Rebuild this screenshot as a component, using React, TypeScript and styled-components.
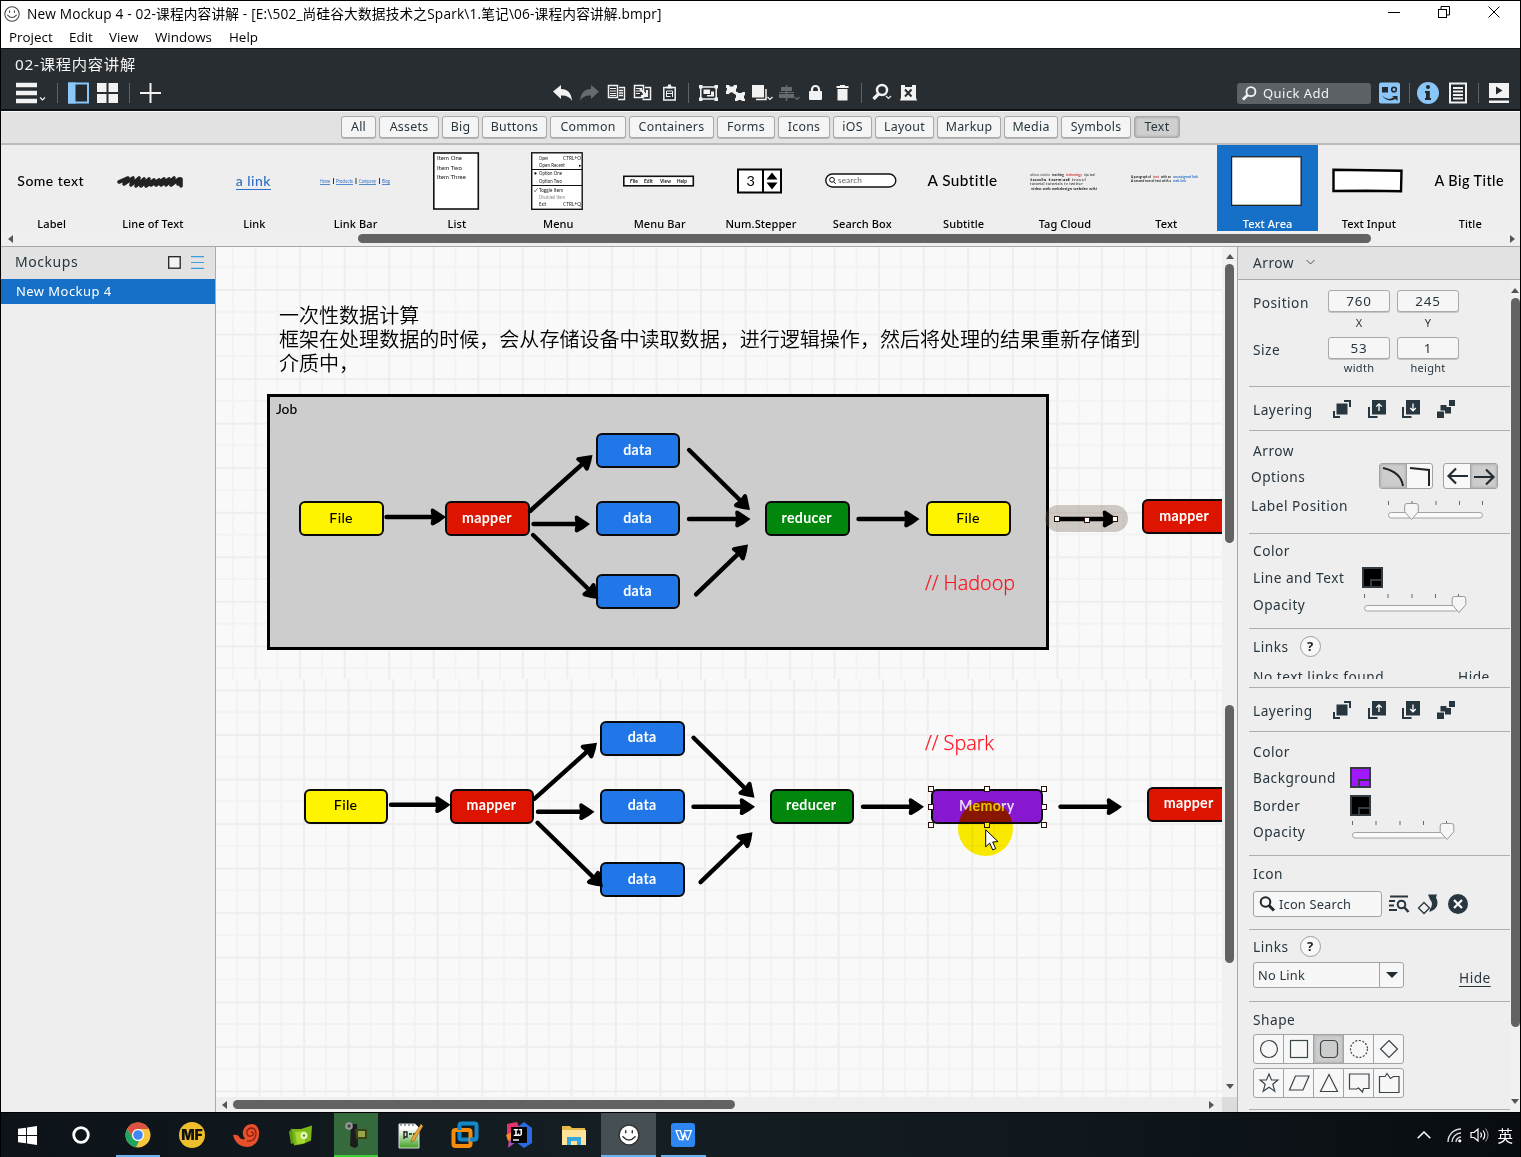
import React from 'react';
import styled, { createGlobalStyle, css } from 'styled-components';

const UI = '"Noto Sans", "Noto Sans CJK SC", sans-serif';
const WIN = '"Open Sans", "Noto Sans CJK SC", sans-serif';
const SKETCH = 'Lato, "Noto Sans CJK SC", sans-serif';

const ink = '#28363f';
const blue = '#1670c8';

const Global = createGlobalStyle`
  * { box-sizing: border-box; }
  body { margin: 0; background: #000; overflow: hidden; }
`;

const Frame = styled.div`
  width: 1521px;
  height: 1157px;
  display: flex;
  flex-direction: column;
  border: 1px solid #000;
  border-bottom: 0;
  background: #eee;
  font-family: ${UI};
  color: ${ink};
  overflow: hidden;
  white-space: nowrap;
`;

/* ---------- window chrome ---------- */

const TitleBar = styled.header`
  display: flex;
  align-items: center;
  height: 26px;
  padding: 0 20px 0 3px;
  background: #fff;
  color: #000;
  font: 13.7px/26px ${WIN};
`;

const TitleText = styled.span`
  flex: 1;
  margin-left: 7px;
  letter-spacing: 0.16px;
`;

const WindowButtons = styled.div`
  display: flex;
  align-items: center;
  gap: 38px;
  margin-top: -4px;
`;

const MenuBar = styled.nav`
  display: flex;
  gap: 16px;
  height: 21px;
  padding-left: 8px;
  background: #fff;
  color: #000;
  font: 13.4px/20px ${WIN};
`;

const MenuItem = styled.span<{ $w: number }>`
  width: ${p => p.$w}px;
`;

const DarkArea = styled.div`
  height: 63px;
  border-top: 1px solid #14181a;
  border-bottom: 2px solid #0e1214;
  background: #282d31;
  color: #f4f4f4;
`;

const DocTitle = styled.div`
  height: 32px;
  padding-left: 14px;
  font: 15.3px/31px ${UI};
  letter-spacing: 0.75px;
`;

const Toolbar = styled.div`
  display: grid;
  grid-template-columns: 552px 1fr 283px;
  height: 26px;
`;

const ToolGroup = styled.div<{ $pad?: number }>`
  display: flex;
  align-items: center;
  height: 24px;
  padding-left: ${p => p.$pad ?? 0}px;
`;

const Tool = styled.span<{ $w: number; $ml?: number }>`
  display: flex;
  width: ${p => p.$w}px;
  height: 22px;
  margin-left: ${p => p.$ml ?? 0}px;
  flex: none;
  svg { width: 100%; height: 22px; overflow: visible; }
`;

const Divider = styled.span<{ $ml: number }>`
  width: 1px;
  height: 20px;
  margin-left: ${p => p.$ml}px;
  background: #5f6467;
`;

const QuickAdd = styled.div`
  display: flex;
  align-items: center;
  gap: 6px;
  width: 134px;
  height: 21px;
  padding-left: 5px;
  border-radius: 3px;
  background: #5c6266;
  font-size: 13px;
  letter-spacing: 0.45px;
`;

/* ---------- component library ---------- */

const Categories = styled.div`
  display: flex;
  justify-content: center;
  gap: 3px;
  height: 34px;
  padding-top: 4px;
  border-top: 1px solid #f8f8f8;
  border-bottom: 2px solid #bcbcbc;
  background: #e2e2e2;
`;

const Category = styled.button<{ $w: number; $on?: boolean }>`
  width: ${p => p.$w}px;
  height: 22px;
  padding: 0;
  border: 1px solid #a9a9a9;
  border-radius: 3px;
  background: ${p => (p.$on ? '#cfcfcf' : '#f5f5f5')};
  box-shadow: ${p => (p.$on ? 'inset 0 0 3px #8d8d8d' : '0 1px 0 #b9b9b9')};
  color: ${ink};
  font: 12.4px/18px ${UI};
  letter-spacing: 0.25px;
`;

const Library = styled.div`
  display: flex;
  height: 86px;
  background: #eee;
  overflow: hidden;
`;

const LibItem = styled.div<{ $on?: boolean }>`
  display: flex;
  flex-direction: column;
  align-items: center;
  flex: 0 0 101.33px;
  height: 86px;
  background: ${p => (p.$on ? blue : 'transparent')};
  color: ${p => (p.$on ? '#fff' : '#000')};
  font: 500 11px/15px ${UI};
  letter-spacing: 0.1px;
`;

const Thumb = styled.div`
  display: flex;
  align-items: center;
  justify-content: center;
  height: 72px;
  padding-right: 2px;
  svg { overflow: visible; }
`;

const SketchText = styled.span<{ $link?: boolean; $size?: number }>`
  color: ${p => (p.$link ? '#2c6fc4' : '#000')};
  font: 500 ${p => p.$size ?? 14}px/17px ${SKETCH};
  letter-spacing: 0.45px;
  ${p => p.$link && css`border-bottom: 1px solid #2c6fc4;`}
`;

/* ---------- scrollbars ---------- */

const HScroll = styled.div<{ $h: number }>`
  display: flex;
  align-items: center;
  height: ${p => p.$h}px;
  background: #efefef;
`;

const HThumb = styled.div<{ $ml: number; $w: number }>`
  width: ${p => p.$w}px;
  height: 9px;
  margin-left: ${p => p.$ml}px;
  border-radius: 5px;
  background: #636363;
`;

const Caret = styled.i<{ $dir: 'l' | 'r' | 'u' | 'd' }>`
  flex: none;
  width: 0;
  height: 0;
  border: 4px solid transparent;
  ${p => p.$dir === 'l' && 'border-right: 5px solid #555; border-left: 0;'}
  ${p => p.$dir === 'r' && 'border-left: 5px solid #555; border-right: 0;'}
  ${p => p.$dir === 'u' && 'border-bottom: 5px solid #555; border-top: 0;'}
  ${p => p.$dir === 'd' && 'border-top: 5px solid #555; border-bottom: 0;'}
`;

const VScroll = styled.div<{ $pt: number; $w?: number }>`
  display: flex;
  flex-direction: column;
  align-items: center;
  width: ${p => p.$w ?? 15}px;
  height: 100%;
  padding-top: ${p => p.$pt}px;
  background: #f1f1f1;
`;

const VThumb = styled.div<{ $h: number; $mt: number }>`
  flex: none;
  width: 9px;
  height: ${p => p.$h}px;
  margin-top: ${p => p.$mt}px;
  border-radius: 5px;
  background: #636363;
`;

const Gap = styled.span<{ $size: number }>`
  flex: 0 0 ${p => p.$size}px;
`;

/* ---------- main area ---------- */

const Main = styled.main`
  display: grid;
  grid-template-columns: 215px 1021px 1fr;
  height: 866px;
  border-top: 1px solid #a8a8a8;
`;

const Sidebar = styled.aside`
  border-right: 1px solid #aaa;
  background: #eee;
`;

const SideHead = styled.div`
  display: flex;
  align-items: center;
  gap: 10px;
  height: 32px;
  padding: 0 11px 2px 14px;
  background: #e2e2e2;
  font-size: 14px;
  letter-spacing: 0.55px;
  span { flex: 1; margin-top: -2px; }
`;

const MockupRow = styled.div`
  height: 25px;
  padding-left: 15px;
  background: ${blue};
  color: #fff;
  font-size: 13px;
  line-height: 24px;
  letter-spacing: 0.45px;
`;

const Center = styled.section`
  display: flex;
  flex-direction: column;
`;

const Pane = styled.div<{ $h: number }>`
  display: flex;
  height: ${p => p.$h}px;
`;

const Canvas = styled.div<{ $gx: number; $gy: number }>`
  position: relative;
  width: 1006px;
  height: 100%;
  overflow: hidden;
  background-color: #f9f9f9;
  background-image:
    linear-gradient(90deg, #eeeeee 2px, transparent 2px),
    linear-gradient(#eeeeee 2px, transparent 2px),
    linear-gradient(90deg, transparent 22px, #f3f3f3 22px, #f3f3f3 24px, transparent 24px),
    linear-gradient(transparent 22px, #f3f3f3 22px, #f3f3f3 24px, transparent 24px);
  background-size: 44.56px 44.56px;
  background-position: ${p => p.$gx}px ${p => p.$gy}px;
`;

const At = styled.div<{ $x: number; $y: number }>`
  position: absolute;
  left: ${p => p.$x}px;
  top: ${p => p.$y}px;
`;

const Note = styled(At)`
  color: #000;
  font: 350 20.05px/24px "Noto Sans CJK SC DemiLight", "Noto Sans CJK SC", sans-serif;
`;

const RedNote = styled(At)`
  color: #ff0f1c;
  font: 300 19.8px/24px "Open Sans", sans-serif;
  -webkit-text-stroke: 0.25px #ff0f1c;
`;

const JobBox = styled(At)`
  width: 782px;
  height: 256px;
  padding: 4px 6px;
  border: 3px solid #000;
  background: #cdcdcd;
  color: #000;
  font: 500 13.8px/16px ${SKETCH};
`;

const NodeBox = styled(At)<{ $w: number; $bg: string; $dark?: boolean; $fg?: string }>`
  display: flex;
  align-items: center;
  justify-content: center;
  width: ${p => p.$w}px;
  height: 35px;
  padding: 0 1px 2px 0;
  border: 2px solid #0a0a0a;
  border-radius: 6px;
  background: ${p => p.$bg};
  color: ${p => p.$fg ?? (p.$dark ? '#000' : '#fff')};
  font: ${p => (p.$dark ? 500 : 700)} 14.2px/18px ${SKETCH};
  letter-spacing: 0.3px;
`;

const Strokes = styled.svg`
  position: absolute;
  inset: 0;
  width: 1006px;
  height: 100%;
`;

const SelectionGlow = styled(At)`
  width: 83px;
  height: 27px;
  border-radius: 14px;
  background: rgba(110, 90, 70, 0.3);
`;

const Handle = styled(At)`
  width: 6px;
  height: 6px;
  border: 1px solid #2a1208;
  background: #fff;
`;

const ClickHalo = styled(At)`
  width: 55px;
  height: 55px;
  border-radius: 50%;
  background: #ffee00;
  mix-blend-mode: multiply;
`;

const Corner = styled.div`
  width: 15px;
  height: 15px;
  background: #dcdcdc;
`;

const Footer = styled.div`
  display: flex;
  > :first-child { width: 1006px; }
`;

/* ---------- inspector ---------- */

const Inspector = styled.aside`
  display: flex;
  flex-direction: column;
  border-left: 1px solid #a8a8a8;
  background: #eee;
  font-size: 13.7px;
  letter-spacing: 0.5px;
`;

const InspectorHead = styled.div`
  display: flex;
  align-items: center;
  gap: 12px;
  height: 33px;
  padding: 0 0 2px 15px;
  border-bottom: 1px solid #aaa;
  background: #e2e2e2;
`;

const InspectorBody = styled.div`
  display: flex;
  height: 832px;
`;

const Stack = styled.div`
  width: 272px;
`;

const Part = styled.div<{ $h: number }>`
  height: ${p => p.$h}px;
  overflow: hidden;
`;

const Section = styled.section<{ $h: number; $pt?: number }>`
  height: ${p => p.$h}px;
  margin-left: 11px;
  padding: ${p => p.$pt ?? 0}px 0 0 4px;
  border-bottom: 1px solid #aeaeae;
`;

const Row = styled.div<{ $h: number; $mt?: number }>`
  display: flex;
  align-items: center;
  height: ${p => p.$h}px;
  margin-top: ${p => p.$mt ?? 0}px;
  svg { overflow: visible; flex: none; }
`;

const Label = styled.span<{ $w?: number; $shift?: number }>`
  width: ${p => (p.$w ? `${p.$w}px` : 'auto')};
  text-indent: ${p => p.$shift ?? 0}px;
  flex: none;
`;

const Geometry = styled.div`
  display: grid;
  grid-template-columns: 75px 62px 62px;
  grid-template-rows: 23px 24px 23px 20px;
  align-items: center;
  > :nth-child(3n) { margin-left: 7px; margin-right: -7px; }
`;

const GeometryLabel = styled.span`
  padding-top: 4px;
`;

const Field = styled.div`
  height: 22px;
  border: 1px solid #a9a9a9;
  border-radius: 3px;
  background: #f6f6f6;
  box-shadow: 0 1px 0 #c6c6c6;
  text-align: center;
  font-size: 13.4px;
  line-height: 20px;
  letter-spacing: 0.9px;
`;

const Caption = styled.span`
  margin-top: -2px;
  text-align: center;
  font-size: 11px;
  line-height: 14px;
  letter-spacing: 0.3px;
`;

const LayerIcons = styled.div`
  display: flex;
  gap: 16.5px;
`;

const Toggle = styled.div`
  display: flex;
  height: 26px;
  border: 1px solid #a3a3a3;
  border-radius: 3px;
  overflow: hidden;
  background: #f8f8f8;
`;

const ToggleCell = styled.span<{ $on?: boolean; $w: number }>`
  display: flex;
  align-items: center;
  justify-content: center;
  width: ${p => p.$w}px;
  background: ${p => (p.$on ? '#cdcdcd' : 'transparent')};
  box-shadow: ${p => (p.$on ? 'inset 0 0 3px #999' : 'none')};
  & + & { border-left: 1px solid #a3a3a3; }
  svg { overflow: visible; }
`;

const SliderBox = styled.span<{ $drop: number }>`
  display: flex;
  padding-top: ${p => p.$drop}px;
`;

const Swatch = styled.span<{ $c: string }>`
  display: flex;
  align-items: flex-end;
  justify-content: flex-end;
  width: 21px;
  height: 21px;
  border: 2px solid #333c42;
  background: ${p => p.$c};
  &::after {
    content: '';
    width: 9px;
    height: 5px;
    border-top: 2px solid #333c42;
    border-left: 2px solid #333c42;
  }
`;

const Help = styled.span`
  display: flex;
  align-items: center;
  justify-content: center;
  width: 21px;
  height: 21px;
  margin-left: 11px;
  border: 1px solid #9d9d9d;
  border-radius: 50%;
  background: #f8f8f8;
  font-weight: 700;
  font-size: 13px;
  letter-spacing: 0;
  color: #222;
`;

const SearchField = styled.div`
  display: flex;
  align-items: center;
  gap: 4px;
  width: 129px;
  height: 26px;
  margin-right: 7px;
  padding-left: 5px;
  border: 1px solid #a3a3a3;
  border-radius: 3px;
  background: #f7f7f7;
  font-size: 12.8px;
  letter-spacing: 0.2px;
`;

const Select = styled.div`
  display: flex;
  align-items: center;
  width: 151px;
  height: 26px;
  padding-left: 4px;
  border: 1px solid #a3a3a3;
  border-radius: 3px;
  background: #f7f7f7;
  font-size: 12.8px;
  letter-spacing: 0.2px;
  > :first-child { flex: 1; }
`;

const SelectArrow = styled.span`
  display: flex;
  align-items: center;
  justify-content: center;
  width: 24px;
  height: 100%;
  border-left: 1px solid #a3a3a3;
  i { border-width: 6px 6px 0; border-style: solid; border-color: #222c33 transparent transparent; }
`;

const HideLink = styled.span<{ $ml: number }>`
  margin-left: ${p => p.$ml}px;
  padding-top: 5px;
  text-decoration: underline;
  text-underline-offset: 3px;
`;

const ShapeRow = styled.div<{ $mt: number }>`
  display: flex;
  width: 151px;
  height: 30px;
  margin-top: ${p => p.$mt}px;
  border: 1px solid #a3a3a3;
  border-radius: 3px;
  background: #f7f7f7;
`;

/* ---------- taskbar ---------- */

const Taskbar = styled.footer`
  display: flex;
  height: 45px;
  margin: 0 -1px;
  border-top: 1px solid #000;
  background: linear-gradient(90deg, #0d1318, #141e23 40%, #10181d 70%, #080c10);
`;

const Task = styled.div<{ $w?: number; $bg?: string; $line?: string; $inset?: number }>`
  display: flex;
  align-items: center;
  justify-content: center;
  flex: 0 0 ${p => (p.$w ?? 54.55) - 2 * (p.$inset ?? 0)}px;
  margin: 0 ${p => p.$inset ?? 0}px;
  height: 44px;
  padding-top: 2px;
  background: ${p => p.$bg ?? 'transparent'};
  border-bottom: 2px solid ${p => p.$line ?? 'transparent'};
  svg { overflow: visible; }
`;

const Tray = styled.div`
  display: flex;
  align-items: center;
  gap: 8px;
  margin-left: auto;
  padding-right: 8px;
  color: #fff;
  font: 15.5px/20px "Noto Sans CJK SC", sans-serif;
`;

/* ---------- drawings ---------- */

const W = '#f2f2f2';

const Arrow = ({ a, b }: { a: [number, number]; b: [number, number] }) => {
  const ang = (Math.atan2(b[1] - a[1], b[0] - a[0]) * 180) / Math.PI;
  const len = Math.hypot(b[0] - a[0], b[1] - a[1]);
  return (
    <g transform={`translate(${a[0]} ${a[1]}) rotate(${ang})`}>
      <path d={`M1.5 0H${len - 10}`} stroke="#000" strokeWidth="4.400" strokeLinecap="round" />
      <path
        transform={`translate(${len} 0)`}
        d="M0 0Q-6 -4 -12.5 -8.3Q-15.6 -8.8 -15.3 -6L-14.3 0L-15.3 6Q-15.6 8.8 -12.5 8.3Q-6 5 0 0Z"
      />
    </g>
  );
};

type Pt = [number, number];
const links: [Pt, Pt][] = [
  [[385, 517], [446, 517]],
  [[529, 512], [592.5, 455]],
  [[532, 524], [590, 524]],
  [[532, 534], [598.5, 599]],
  [[688, 449], [750, 510]],
  [[687.5, 519], [750.5, 519]],
  [[695, 595.5], [748, 544.5]],
  [[857, 519], [919.5, 519]],
];

const RED = '#dc1400';
const BLUE = '#2277e8';
const nodes = [
  { x: 299.4, y: 501, t: 'File', c: '#fff400', dark: true },
  { x: 445.2, y: 501, t: 'mapper', c: RED },
  { x: 595.8, y: 433, t: 'data', c: BLUE },
  { x: 595.8, y: 501, t: 'data', c: BLUE },
  { x: 595.8, y: 574.4, t: 'data', c: BLUE },
  { x: 765, y: 501, t: 'reducer', c: '#00870c' },
  { x: 1142.4, y: 499, t: 'mapper', c: RED },
];

const Flow = ({ dx, dy, extra }: { dx: number; dy: number; extra?: boolean }) => (
  <>
    {nodes.map((n, i) => (
      <NodeBox key={i} $x={n.x + dx} $y={n.y + dy} $w={84.5} $bg={n.c} $dark={n.dark}>{n.t}</NodeBox>
    ))}
    <Strokes>
      <g transform={`translate(${dx} ${dy})`}>
        {links.map(([a, b], i) => <Arrow key={i} a={a} b={b} />)}
        {extra && <Arrow a={[1054.5, 519]} b={[1117.5, 519]} />}
      </g>
    </Strokes>
  </>
);

const Chev = ({ x, y, c = W }: { x: number; y: number; c?: string }) => (
  <path d={`M${x} ${y}l2.500 2.500 2.500-2.500`} fill="none" stroke={c} strokeWidth="1.200" />
);

const Face = ({ s, fill, stroke }: { s: number; fill: string; stroke: string }) => (
  <svg width={s} height={s} viewBox="0 0 20 20" fill="none" stroke={stroke} strokeWidth="1.300">
    <circle cx="10" cy="10" r="9" fill={fill} />
    <path d="M7 6v2M13 6v2M4.500 11.500q5.500 6 11 0" strokeLinecap="round" />
  </svg>
);

const Undo = ({ flip, c }: { flip?: boolean; c: string }) => (
  <svg viewBox="0 0 19 22"><path transform={flip ? 'translate(19 0) scale(-1 1)' : undefined} d="M0 9.500L8 3v4q10 0 11 12q-3-6-11-5.500v3.500z" fill={c} /></svg>
);

const LayerIcon = ({ k }: { k: number }) => (
  <svg width="18" height="18" viewBox="0 0 18 18">
    {k === 0 && <><rect x="3.500" y="3.500" width="11" height="11" fill={ink} /><path d="M11 1h6v6M1 11v6h6" fill="none" stroke={ink} strokeWidth="2" /></>}
    {(k === 1 || k === 2) && (
      <>
        <rect x="4" y="0" width="14" height="14.500" fill={ink} />
        <path d="M1 7v10h8.500" fill="none" stroke={ink} strokeWidth="2" />
        <path d={k === 1 ? 'M11 11V4M8.200 6.600L11 3.800l2.800 2.800' : 'M11 3.500v7M8.200 8L11 10.800 13.800 8'} fill="none" stroke="#fff" strokeWidth="1.300" />
      </>
    )}
    {k === 3 && <g fill={ink}><rect x="12" y="0" width="6" height="6" /><rect x="0" y="11.500" width="7" height="6.500" /><rect x="3.500" y="5" width="6" height="5.500" /><rect x="8" y="7" width="6" height="6.500" /></g>}
  </svg>
);

const Slider = ({ v, drop = 3 }: { v: number; drop?: number }) => (
  <SliderBox $drop={drop}>
    <svg width="95" height="24" viewBox="0 0 95 24">
      <path d="M.5 0v4M24 0v4M48 0v4M71.500 0v4M94.500 0v4" stroke="#666" />
      <rect x=".5" y="11.500" width="94" height="5.500" rx="2.700" fill="#fafafa" stroke="#a3a3a3" />
      <path transform={`translate(${v} 2)`} d="M-4.500 .5h9q2.300 0 2.300 2.300v6L0 16.500l-6.800-7.700v-6q0-2.300 2.300-2.300z" fill="#f6f6f6" stroke="#999" />
    </svg>
  </SliderBox>
);

const shapes: React.ReactNode[] = [
  <circle cx="9" cy="9" r="8.500" />,
  <rect x=".5" y=".5" width="17" height="17" />,
  <rect x=".5" y=".5" width="17" height="17" rx="4" />,
  <circle cx="9" cy="9" r="8.500" strokeDasharray="2 1.600" />,
  <path d="M9 .5L17.500 9 9 17.500 .5 9z" />,
  <path d="M9 0l2.500 6h6.300l-5 4.200 2 7L9 13.200l-5.800 4 2-7L.2 6h6.300z" />,
  <path d="M5.500 2h13.500l-6 14H-.5z" />,
  <path d="M9 .5l8.500 17H.5z" />,
  <path d="M-.5 0h19.500v14.500h-5.500l-1 3.500-4-4-2 1H-.5z" />,
  <path d="M-.5 2.500h5.500l2-3 3.500 5 3-2h5.500v16H-.5z" />,
];

const ShapeCells = ({ from, on }: { from: number; on?: number }) => (
  <>
    {shapes.slice(from, from + 5).map((s, i) => (
      <ToggleCell key={i} $w={i === 0 ? 29 : 30} $on={i === on}>
        <svg width="18" height="18" viewBox="0 0 18 18" fill="none" stroke="#3a454c" strokeWidth="1.200">{s}</svg>
      </ToggleCell>
    ))}
  </>
);

const Lens = ({ s, c, flip }: { s: number; c: string; flip?: boolean }) => (
  <svg width={s} height={s} viewBox="0 0 16 16" fill="none" stroke={c}>
    <g transform={flip ? 'translate(16 0) scale(-1 1)' : undefined}>
      <circle cx="6.500" cy="6" r="4.800" strokeWidth="2" />
      <path d="M10 9.500l5 5" strokeWidth="3" />
    </g>
  </svg>
);

const tiny = (x: number, y: number, t: string, w: number, fill = '#111', size = 6, weight = 400) => (
  <text x={x} y={y} fill={fill} fontSize={size} fontWeight={weight} fontFamily={SKETCH} textLength={w} lengthAdjust="spacingAndGlyphs">{t}</text>
);

const library: { n: string; on?: boolean; d: React.ReactNode }[] = [
  { n: 'Label', d: <SketchText>Some text</SketchText> },
  { n: 'Line of Text', d: (
    <svg width="68" height="12" fill="none" stroke="#222" strokeWidth="3.600" strokeLinecap="round" strokeLinejoin="round">
      <path d="M1 7l9-4-4 6 9-6-2 7 8-7-3 8 8-7-3 7 8-7-3 7 8-6-3 5 8-5-3 5 8-6-3 6 8-6-3 6 8-7-3 7 8-6-1 5 3-5v7" />
    </svg>) },
  { n: 'Link', d: <SketchText $link>a link</SketchText> },
  { n: 'Link Bar', d: (
    <svg width="70" height="10">
      {tiny(0, 7, 'Home', 10, '#2c6fc4')}{tiny(16, 7, 'Products', 17, '#2c6fc4')}{tiny(39, 7, 'Company', 17, '#2c6fc4')}{tiny(62, 7, 'Blog', 8, '#2c6fc4')}
      <path d="M0 8.500h10M16 8.500h17M39 8.500h17M62 8.500h8" stroke="#2c6fc4" strokeWidth=".8" />
      <path d="M13.500 2v6M36 2v6M59.500 2v6" stroke="#333" />
    </svg>) },
  { n: 'List', d: (
    <svg width="46" height="58">
      <rect x=".8" y="1" width="44.500" height="56" fill="#fff" stroke="#111" strokeWidth="1.600" />
      {tiny(4, 8, 'Item One', 25)}{tiny(4, 17.5, 'Item Two', 25)}{tiny(4, 27, 'Item Three', 29)}
    </svg>) },
  { n: 'Menu', d: (
    <svg width="52" height="58">
      <rect x=".7" y=".8" width="50.500" height="56.500" fill="#fff" stroke="#111" strokeWidth="1.400" />
      {tiny(8, 7.5, 'Open', 9, '#111', 5)}{tiny(32, 7.5, 'CTRL+O', 18, '#111', 5)}
      {tiny(8, 14.5, 'Open Recent', 26, '#111', 5)}{tiny(48, 14.5, '▸', 3, '#111', 5)}
      {tiny(3, 23, '●', 3, '#111', 5)}{tiny(8, 23, 'Option One', 23, '#111', 5)}
      {tiny(8, 30.5, 'Option Two', 23, '#111', 5)}
      {tiny(3, 39.5, '✓', 4, '#111', 5)}{tiny(8, 39.5, 'Toggle Item', 24, '#111', 5)}
      {tiny(8, 46.5, 'Disabled Item', 26, '#888', 5)}
      {tiny(8, 53.5, 'Exit', 7, '#111', 5)}{tiny(32, 53.5, 'CTRL+Q', 18, '#111', 5)}
      <path d="M1 17.500h50M1 33.500h50" stroke="#111" />
    </svg>) },
  { n: 'Menu Bar', d: (
    <svg width="71" height="12">
      <rect x=".8" y="1.300" width="69.500" height="9.500" fill="#fff" stroke="#111" strokeWidth="1.600" />
      {tiny(7, 8, 'File', 8, '#111', 5.5, 700)}{tiny(21, 8, 'Edit', 9, '#111', 5.5, 700)}{tiny(37, 8, 'View', 11, '#111', 5.5, 700)}{tiny(54, 8, 'Help', 10, '#111', 5.5, 700)}
    </svg>) },
  { n: 'Num.Stepper', d: (
    <svg width="45" height="26">
      <rect x="1" y="1.500" width="43" height="23" fill="#fff" stroke="#000" strokeWidth="2" />
      <path d="M26 1v24" stroke="#000" strokeWidth="2" />
      <path d="M29.500 11.500l5.500-7 5.500 7zM29.500 14.500l5.500 7 5.500-7z" />
      {tiny(9.5, 18, '3', 8.5, '#000', 14)}
    </svg>) },
  { n: 'Search Box', d: (
    <svg width="72" height="15" fill="none" stroke="#111">
      <rect x=".8" y="1" width="70" height="13" rx="6.500" fill="#fff" strokeWidth="1.400" />
      <circle cx="7" cy="6.800" r="2.400" /><path d="M8.800 8.800l2 2" />
      <g stroke="none">{tiny(13, 9.5, 'search', 24, '#666', 7.5)}</g>
    </svg>) },
  { n: 'Subtitle', d: <SketchText $size={15.3}>A Subtitle</SketchText> },
  { n: 'Tag Cloud', d: (
    <svg width="68" height="22">
      {tiny(0, 5.6, 'software statistics', 20, '#333', 3.2)}{tiny(22, 5.6, 'teaching', 12, '#111', 3.8, 700)}{tiny(36, 5.6, 'technology', 16, '#c33', 3.8, 700)}{tiny(54, 5.6, 'tips tool', 11, '#111', 3.4)}
      {tiny(0, 10.5, 'tools toread', 40, '#222', 3.7, 700)}{tiny(42, 10.5, 'travel', 14, '#222', 3.4)}{tiny(0, 15.4, 'tutorial tutorials tv twitter', 53, '#222', 3.7)}
      {tiny(1, 20.3, 'video web webdesign webdev wiki', 66, '#222', 3.7, 700)}
    </svg>) },
  { n: 'Text', d: (
    <svg width="68" height="34">
      {tiny(0, 13.5, 'A paragraph of', 20, '#111', 3.6, 700)}{tiny(22, 13.5, 'text', 6, '#c33', 3.6, 700)}{tiny(30, 13.5, 'with an', 10, '#111', 3.6, 700)}{tiny(42, 13.5, 'unassigned link', 25, '#2c6fc4', 3.6, 700)}
      {tiny(0, 18.3, 'A second row of text with a', 40, '#111', 3.6, 700)}{tiny(42, 18.3, 'web link', 13, '#2c6fc4', 3.6, 700)}
    </svg>) },
  { n: 'Text Area', on: true, d: <svg width="71" height="50"><rect x=".6" y=".8" width="69.500" height="48.500" fill="#fff" stroke="#1a1a1a" strokeWidth="1.200" /></svg> },
  { n: 'Text Input', d: <svg width="71" height="25"><path d="M1.500 1.800l68 1-.5 20.500-34-.6-33.500.3z" fill="#fff" stroke="#000" strokeWidth="2.400" /></svg> },
  { n: 'Title', d: <SketchText $size={14.4}>A Big Title</SketchText> },
];

const categories: [string, number][] = [
  ['All', 35], ['Assets', 60], ['Big', 37], ['Buttons', 65], ['Common', 76], ['Containers', 85], ['Forms', 58],
  ['Icons', 52], ['iOS', 39], ['Layout', 59], ['Markup', 64], ['Media', 54], ['Symbols', 70], ['Text', 46],
];

const menus: [string, number][] = [['Project', 44], ['Edit', 24], ['View', 30], ['Windows', 58], ['Help', 32]];

const Layering = ({ h }: { h: number }) => (
  <Row $h={h}>
    <Label $w={80}>Layering</Label>
    <LayerIcons>{[0, 1, 2, 3].map(k => <LayerIcon key={k} k={k} />)}</LayerIcons>
  </Row>
);

const handles: Pt[] = [[931, 789], [987, 789], [1044, 789], [931, 807], [1044, 807], [931, 825], [987, 825], [1044, 825]];

export default function App() {
  return (
    <Frame>
      <Global />
      <TitleBar>
        <Face s={16} fill="#fff" stroke="#444" />
        <TitleText>{'New Mockup 4 - 02-课程内容讲解 - [E:\\502_尚硅谷大数据技术之Spark\\1.笔记\\06-课程内容讲解.bmpr]'}</TitleText>
        <WindowButtons>
          <svg width="12" height="12" stroke="#000"><path d="M0 6.500h12" /></svg>
          <svg width="12" height="12" fill="none" stroke="#000"><rect x=".5" y="3.500" width="8" height="8" /><path d="M3 3.500v-3h8.500v8.500h-3" /></svg>
          <svg width="12" height="12" stroke="#000"><path d="M.5 .5l11 11M11.500 .5l-11 11" /></svg>
        </WindowButtons>
      </TitleBar>
      <MenuBar>{menus.map(([m, w]) => <MenuItem key={m} $w={w}>{m}</MenuItem>)}</MenuBar>

      <DarkArea>
        <DocTitle>02-课程内容讲解</DocTitle>
        <Toolbar>
          <ToolGroup $pad={15}>
            <Tool $w={30}><svg viewBox="0 0 30 22"><path d="M0 3h21M0 11h21M0 19h21" stroke={W} strokeWidth="4.400" /><Chev x={24} y={15.5} /></svg></Tool>
            <Divider $ml={11} />
            <Tool $w={21} $ml={10}><svg viewBox="0 0 21 22"><rect x="1" y="1.500" width="19" height="19" fill="#23292c" stroke="#8ac6f8" strokeWidth="2" /><path d="M0 .5h7.500v21H0z" fill="#8ac6f8" /></svg></Tool>
            <Tool $w={21} $ml={8}><svg viewBox="0 0 21 22" fill={W}><path d="M0 1h9.500v9H0zM11.500 1H21v9h-9.500zM0 12h9.500v9H0zM11.500 12H21v9h-9.500z" /></svg></Tool>
            <Divider $ml={11} />
            <Tool $w={21} $ml={10}><svg viewBox="0 0 21 22" stroke={W} strokeWidth="2"><path d="M10.500 1v20M0 11h21" /></svg></Tool>
          </ToolGroup>
          <ToolGroup>
            <Tool $w={19}><Undo c={W} /></Tool>
            <Tool $w={19} $ml={8}><Undo c="#666b6e" flip /></Tool>
            <Tool $w={17} $ml={9}><svg viewBox="0 0 17 22" fill="none" stroke={W}><rect x=".5" y="3.500" width="9" height="12" strokeWidth="1.500" /><path d="M2 6.500h6M2 9h6M2 11.500h6M2 13.500h6" /><path d="M11 5.500h5.500v12h-6.500M11 8.500h4M11 11h4M11 13.500h4" strokeWidth="1.400" /></svg></Tool>
            <Tool $w={17} $ml={9}><svg viewBox="0 0 17 22" fill="none" stroke={W}><rect x=".5" y="3.500" width="9" height="12" strokeWidth="1.500" /><path d="M2 6.500h6M2 9h5M2 11.500h4" /><path d="M11 5.500h5.500v12h-8" strokeWidth="1.500" /><path d="M6 7l6 6M13 8v6h-6" strokeWidth="2.200" /></svg></Tool>
            <Tool $w={13} $ml={12}><svg viewBox="0 0 13 22" fill="none" stroke={W}><rect x=".8" y="5.500" width="11.400" height="12.500" strokeWidth="1.500" /><path d="M3.500 5.500h6M5 3.500h3" strokeWidth="2" /><path d="M3.500 9h6M3.500 11.500h6M3.500 14.500h4M3.500 9v6M9.500 9v6" /></svg></Tool>
            <Divider $ml={12} />
            <Tool $w={19} $ml={10}><svg viewBox="0 0 19 22"><rect x="1.800" y="5" width="15.400" height="12" fill="none" stroke={W} strokeWidth="1.500" /><path d="M0 3h3.500v3.500H0zM15.500 3H19v3.500h-3.500zM0 15.500h3.500V19H0zM15.500 15.500H19V19h-3.500zM4.500 7.500h6.500v4.500H4.500zM12 9.500h3v5H8v-1.500h4z" fill={W} /></svg></Tool>
            <Tool $w={19} $ml={8}><svg viewBox="0 0 19 22" fill={W}><path d="M0 3h3l1 1.500h3l1-1.500h3v3l-1 1v2l1 3H8l-1-1.500H4L3 12H0V9l1-1V6.500L0 5.500z" /><path d="M9 10h2.500l1 1h3l1-1H19v3l-1 .8v2.400l1 .8v2h-3l-1-1h-2.500l-1 1H9v-2.500l1-1V13l-1-.8z" /></svg></Tool>
            <Tool $w={21} $ml={7}><svg viewBox="0 0 21 22"><rect x="0" y="3" width="12" height="12.500" fill={W} /><path d="M14 7v10.500H4" fill="none" stroke={W} strokeWidth="1.500" /><Chev x={15.5} y={15} /></svg></Tool>
            <Tool $w={21} $ml={6}><svg viewBox="0 0 21 22"><path d="M2 7h11M0 14h15" stroke="#666b6e" strokeWidth="4" /><path d="M7.500 3v16" stroke="#666b6e" strokeWidth="1.500" /><path d="M0 10.500h15" stroke="#666b6e" /><Chev x={15.5} y={15} c="#666b6e" /></svg></Tool>
            <Tool $w={13} $ml={9}><svg viewBox="0 0 13 22"><rect x="0" y="9" width="13" height="9" rx="1" fill={W} /><path d="M3 10V7.500a3.500 3.500 0 017 0V10" fill="none" stroke={W} strokeWidth="2.200" /></svg></Tool>
            <Tool $w={13} $ml={14}><svg viewBox="0 0 13 22"><path d="M.5 5h12M4 4h5" stroke={W} strokeWidth="2" /><path d="M1.500 7h10v11.500h-10z" fill={W} /></svg></Tool>
            <Divider $ml={12} />
            <Tool $w={19} $ml={11}><svg viewBox="0 0 19 22"><circle cx="9" cy="8" r="5" fill="none" stroke={W} strokeWidth="2.500" /><path d="M5.500 12l-5 5" stroke={W} strokeWidth="3.200" /><Chev x={13} y={14} /></svg></Tool>
            <Tool $w={17} $ml={8}><svg viewBox="0 0 17 22"><path d="M1 3h4v2h7V3h4v12.500l1 3H0l1-3z" fill={W} /><path d="M5 7.500l6.500 7M11.500 7.500l-6.500 7" stroke="#282d31" strokeWidth="2" /></svg></Tool>
          </ToolGroup>
          <ToolGroup>
            <QuickAdd><Lens s={15} c={W} flip />Quick Add</QuickAdd>
            <Tool $w={21} $ml={8}><svg viewBox="0 0 21 22"><rect x="0" y=".5" width="21" height="21" rx="2" fill="#8ac6f8" /><path d="M3 5h6v5.500H3z" fill="#23292c" /><circle cx="15" cy="7.500" r="2.300" fill="none" stroke="#23292c" strokeWidth="1.600" /><path d="M3 13.500q6 6 12 1.500l-2.500-1h6v5l-2-2q-8 4-13.500-3.500z" fill="#23292c" /></svg></Tool>
            <Divider $ml={9} />
            <Tool $w={22} $ml={7}><svg viewBox="0 0 22 22"><circle cx="11" cy="11" r="11" fill="#8ac6f8" /><circle cx="11" cy="5" r="2" fill="#23292c" /><path d="M8 9h4.800v7H14v2H8v-2h1v-5H8z" fill="#23292c" /></svg></Tool>
            <Tool $w={18} $ml={10}><svg viewBox="0 0 18 22" stroke={W}><rect x="1" y="1.500" width="16" height="19" fill="#23292c" strokeWidth="2" /><path d="M4 6h10M4 9.500h10M4 13h10M4 16.500h10" strokeWidth="1.800" /></svg></Tool>
            <Divider $ml={11} />
            <Tool $w={20} $ml={10}><svg viewBox="0 0 20 22"><path d="M0 1h20v15H0zM0 18.500h20v2.500H0z" fill={W} /><path d="M7 4.500v8l6.500-4z" fill="#23292c" /></svg></Tool>
          </ToolGroup>
        </Toolbar>
      </DarkArea>

      <Categories>
        {categories.map(([c, w]) => <Category key={c} $w={w} $on={c === 'Text'}>{c}</Category>)}
      </Categories>
      <Library>
        {library.map(l => <LibItem key={l.n} $on={l.on}><Thumb>{l.d}</Thumb>{l.n}</LibItem>)}
      </Library>
      <HScroll $h={15}>
        <Gap $size={7} /><Caret $dir="l" />
        <HThumb $ml={345} $w={1013} />
        <Gap $size={139} /><Caret $dir="r" />
      </HScroll>

      <Main>
        <Sidebar>
          <SideHead>
            <span>Mockups</span>
            <svg width="13" height="13" fill="#f4f4f4" stroke="#222"><rect x=".7" y=".7" width="11.500" height="11.500" strokeWidth="1.300" /></svg>
            <svg width="13" height="13" stroke="#3e9bdc" strokeWidth="1.200"><path d="M0 .7h13M0 6.500h13M0 12.300h13" /></svg>
          </SideHead>
          <MockupRow>New Mockup 4</MockupRow>
        </Sidebar>

        <Center>
          <Pane $h={432}>
            <Canvas $gx={-6} $gy={42}>
              <Note $x={63} $y={55.5}>
                一次性数据计算<br />
                框架在处理数据的时候，会从存储设备中读取数据，进行逻辑操作，然后将处理的结果重新存储到<br />
                介质中，
              </Note>
              <JobBox $x={51} $y={147}>Job</JobBox>
              <Flow dx={-216} dy={-247} />
              <NodeBox $x={710.3} $y={254} $w={84.5} $bg="#fff400" $dark>File</NodeBox>
              <RedNote $x={709} $y={323.5}>// Hadoop</RedNote>
              <SelectionGlow $x={829} $y={258} />
              <Strokes><Arrow a={[839, 272]} b={[902, 272]} /></Strokes>
              <Handle $x={838} $y={269} /><Handle $x={868} $y={270} /><Handle $x={896} $y={269} />
            </Canvas>
            <VScroll $pt={7}><Caret $dir="u" /><VThumb $h={279} $mt={5} /></VScroll>
          </Pane>
          <Pane $h={418}>
            <Canvas $gx={-2} $gy={55}>
              <Flow dx={-211.5} dy={-391.3} extra />
              <NodeBox $x={715.3} $y={110} $w={112} $bg="#8817d2" $fg="#e2d2f0">Memory</NodeBox>
              <RedNote $x={709} $y={51.5}>// Spark</RedNote>
              {handles.map(([x, y], i) => <Handle key={i} $x={x - 219} $y={y - 682} />)}
              <ClickHalo $x={741.5} $y={122} />
              <At $x={769} $y={150}>
                <svg width="14" height="22" fill="#fff" stroke="#000"><path d="M.7 .8v17l4-3.700 3 6.800 3-1.300-3-6.600 5.300-.4z" /></svg>
              </At>
            </Canvas>
            <VScroll $pt={26}><VThumb $h={258} $mt={0} /><Gap $size={121} /><Caret $dir="d" /></VScroll>
          </Pane>
          <Footer>
            <HScroll $h={15}><Gap $size={6} /><Caret $dir="l" /><HThumb $ml={6} $w={502} /><Gap $size={474} /><Caret $dir="r" /></HScroll>
            <Corner />
          </Footer>
        </Center>

        <Inspector>
          <InspectorHead>
            Arrow
            <svg width="9" height="6" fill="none" stroke="#555"><path d="M.5 1l4 4 4-4" /></svg>
          </InspectorHead>
          <InspectorBody>
            <Stack>
              <Part $h={399}>
                <Section $h={107} $pt={9}>
                  <Geometry>
                    <GeometryLabel>Position</GeometryLabel><Field>760</Field><Field>245</Field>
                    <span /><Caption>X</Caption><Caption>Y</Caption>
                    <GeometryLabel>Size</GeometryLabel><Field>53</Field><Field>1</Field>
                    <span /><Caption>width</Caption><Caption>height</Caption>
                  </Geometry>
                </Section>
                <Section $h={44}><Layering h={44} /></Section>
                <Section $h={103} $pt={7}>
                  <Row $h={24}>Arrow</Row>
                  <Row $h={28}>
                    <Label $w={126} $shift={-2}>Options</Label>
                    <Toggle>
                      <ToggleCell $w={26} $on><svg width="22" height="20" fill="none" stroke="#222" strokeWidth="2"><path d="M1 2q18 4 20 18" /></svg></ToggleCell>
                      <ToggleCell $w={26}><svg width="22" height="20" fill="none" stroke="#222" strokeWidth="2"><path d="M1 2l19 2v16" /></svg></ToggleCell>
                    </Toggle>
                    <Gap $size={10} />
                    <Toggle>
                      <ToggleCell $w={26}><svg width="21" height="18" fill="none" stroke="#222c33" strokeWidth="2.200"><path d="M21 9H2M9 1.500L1.500 9 9 16.500" /></svg></ToggleCell>
                      <ToggleCell $w={27} $on><svg width="21" height="18" fill="none" stroke="#222c33" strokeWidth="2.200"><path d="M0 10h19M12 2.500l7.500 7.500-7.500 7.500" /></svg></ToggleCell>
                    </Toggle>
                  </Row>
                  <Row $h={30}><Label $w={135} $shift={-2}>Label Position</Label><Slider v={23.5} drop={16} /></Row>
                </Section>
                <Section $h={95} $pt={4}>
                  <Row $h={24}>Color</Row>
                  <Row $h={30}><Label $w={109}>Line and Text</Label><Swatch $c="#000" /></Row>
                  <Row $h={24}><Label $w={111}>Opacity</Label><Slider v={95} /></Row>
                </Section>
                <Section $h={80} $pt={6}>
                  <Row $h={22}>Links<Help>?</Help></Row>
                  <Row $h={20} $mt={9}><Label $w={205}>No text links found</Label><span>Hide</span></Row>
                </Section>
              </Part>
              <Part $h={433}>
                <Section $h={9} />
                <Section $h={44}><Layering h={44} /></Section>
                <Section $h={124} $pt={7}>
                  <Row $h={24}>Color</Row>
                  <Row $h={29}><Label $w={97}>Background</Label><Swatch $c="#a118ff" /></Row>
                  <Row $h={26}><Label $w={97}>Border</Label><Swatch $c="#000" /></Row>
                  <Row $h={27}><Label $w={99}>Opacity</Label><Slider v={95} /></Row>
                </Section>
                <Section $h={74} $pt={5}>
                  <Row $h={24}>Icon</Row>
                  <Row $h={26} $mt={6}>
                    <SearchField><Lens s={16} c="#1c252b" />Icon Search</SearchField>
                    <svg width="20" height="18" fill="none" stroke={ink} strokeWidth="2"><path d="M1 1.500h18M0 6h6M0 10.500h5M0 15h8" /><circle cx="12.500" cy="9.500" r="3.800" /><path d="M15.500 12.500l4 4.500" strokeWidth="2.500" /></svg>
                    <Gap $size={9} />
                    <svg width="20" height="20"><path d="M6 8.500l5.500 5.500L6 19.500 .5 14z" fill="none" stroke={ink} strokeWidth="1.300" /><path d="M10 .5h9l-1 3q5 10-6.500 14.500l.5-3q4-5 0-9.500z" fill={ink} /></svg>
                    <Gap $size={10} />
                    <svg width="20" height="20"><circle cx="10" cy="10" r="10" fill={ink} /><path d="M6 6l8 8M14 6l-8 8" stroke="#fff" strokeWidth="2.200" /></svg>
                  </Row>
                </Section>
                <Section $h={72} $pt={4}>
                  <Row $h={24}>Links<Help>?</Help></Row>
                  <Row $h={26} $mt={4}>
                    <Select><span>No Link</span><SelectArrow><i /></SelectArrow></Select>
                    <HideLink $ml={55}>Hide</HideLink>
                  </Row>
                </Section>
                <Section $h={108} $pt={5}>
                  <Row $h={24}>Shape</Row>
                  <ShapeRow $mt={3}><ShapeCells from={0} on={2} /></ShapeRow>
                  <ShapeRow $mt={4}><ShapeCells from={5} /></ShapeRow>
                </Section>
              </Part>
            </Stack>
            <VScroll $pt={8} $w={10}><Caret $dir="u" /><VThumb $h={729} $mt={5} /><Gap $size={72} /><Caret $dir="d" /></VScroll>
          </InspectorBody>
        </Inspector>
      </Main>

      <Taskbar>
        <Task $w={54}><svg width="19" height="19" fill="#fff"><path d="M0 2.800l8-1.100v7.300H0zM9 1.500L19 0v9H9zM0 10h8v7.300L0 16.200zM9 10h10v9L9 17.500z" /></svg></Task>
        <Task $w={56.5}><svg width="18" height="18"><circle cx="8" cy="9" r="7.300" fill="none" stroke="#fff" strokeWidth="2.800" /></svg></Task>
        <Task $inset={5} $line="#6cb2f0">
          <svg width="26" height="26" viewBox="0 0 26 26"><circle cx="13" cy="13" r="12.500" fill="#f8c63c" /><path d="M2.200 6.700A12.500 12.500 0 0113 .5c4.600 0 8.700 2.500 10.800 6.500H13a6 6 0 00-5.200 9z" fill="#dd5144" /><path d="M2.200 6.700l5.600 9.500A6 6 0 0014 19l-3 6.300A12.500 12.500 0 012.200 6.700z" fill="#1da362" /><circle cx="13" cy="13" r="6" fill="#fff" /><circle cx="13" cy="13" r="4.800" fill="#4285f4" /></svg>
        </Task>
        <Task><svg width="26" height="26"><circle cx="13" cy="13" r="13" fill="#edbf2c" /><text x="13" y="18" textAnchor="middle" fontFamily="Inter, sans-serif" fontWeight="900" fontSize="14" fill="#111">MF</text></svg></Task>
        <Task>
          <svg width="27" height="23"><path d="M0 11q5-1 7 3 2 2 5 1-3-4-2-8Q12 0 19 0q5 0 7 7 1 14-11 16Q3 23 0 11z" fill="#e8502c" /><path d="M14 17q8 1 9-7 0-6-5-6-5 1-4 6 2 4 6 1 1-3-2-3" fill="none" stroke="#8a1f10" strokeWidth="1.300" /></svg>
        </Task>
        <Task>
          <svg width="24" height="21"><path d="M0 7l3-4 3 15-4 1z" fill="#5a9c10" /><path d="M3 4l9 0 11-3.500-1 15-8 3.500-9 1.500z" fill="#7db818" /><path d="M6 7l10-1v12l-8 1z" fill="#a6d832" /><circle cx="15" cy="10.500" r="3.500" fill="#eaf7c8" /><circle cx="15" cy="10.500" r="1.300" fill="#5a9c10" /></svg>
        </Task>
        <Task $inset={5} $bg="#356a3c" $line="#3fcb35">
          <svg width="22" height="26"><path d="M6 2h6l1 22-3 2-5-2z" fill="#1b1c1c" /><circle cx="4" cy="4" r="3.800" fill="#999" /><circle cx="4" cy="4" r="1.800" fill="#444" /><path d="M10 7h12v10H11z" fill="#39431b" /><path d="M13 9h7v6h-7z" fill="#99a448" /></svg>
        </Task>
        <Task>
          <svg width="26" height="27"><defs><linearGradient id="npp" x2="0" y2="1"><stop offset=".2" stopColor="#fff" /><stop offset="1" stopColor="#3fa021" /></linearGradient></defs><path d="M1 2h16l4 4v20H1z" fill="url(#npp)" stroke="#ddd" /><path d="M3 2v2M7 2v2M11 2v2M15 2v2" stroke="#555" /><path d="M6 9v8M6 10h3v5H6M11 12h3M15 12h3" fill="none" stroke="#222" strokeWidth="1.400" /><path d="M13 20l1-4L23 2l2 2-9 15z" fill="#e9a632" stroke="#8f5a14" strokeWidth=".6" /></svg>
        </Task>
        <Task>
          <svg width="28" height="28" fill="none" strokeWidth="4"><rect x="8.500" y="2.500" width="17" height="16" rx="2" stroke="#1588c9" /><rect x="2.500" y="9" width="17" height="16" rx="2" stroke="#f58c0c" /><path d="M8.500 9v-3M19 18.500h5" stroke="#1588c9" /></svg>
        </Task>
        <Task>
          <svg width="27" height="26"><path d="M1 2l10-2 5 12L2 25l1-9-2-4z" fill="#e2336b" /><path d="M0 13l6-3 4 6-8 3z" fill="#f58a2c" /><path d="M13 4l5-4 8 6v15l-8 5-8-6z" fill="#2b6ae3" /><path d="M2 26l8-6-5-4z" fill="#9a56b8" /><rect x="5" y="5" width="16" height="16" fill="#050505" /><text x="7" y="14" fontFamily="Liberation Mono, monospace" fontWeight="700" fontSize="10" fill="#fff" textLength="10">IJ</text><path d="M7 18h6" stroke="#fff" strokeWidth="1.400" /></svg>
        </Task>
        <Task>
          <svg width="24" height="21"><path d="M0 1h8l2 2h13v17H0z" fill="#e9b84a" /><path d="M0 5h24v15H0z" fill="#ffe398" /><path d="M5 20v-8h14v8h-4v-4h-6v4z" fill="#35a8e4" /></svg>
        </Task>
        <Task $bg="#454f54" $line="#6cb2f0"><Face s={22} fill="#fff" stroke="#333" /></Task>
        <Task $inset={5} $line="#6cb2f0">
          <svg width="24" height="24"><rect width="24" height="24" rx="3" fill="#2d86f2" /><path d="M4.500 7.700h4.800l2.700 8.500 2-5M5 7.700l3.500 9h2.500l2.700-7 2.300 7h1l3.300-9h-7" fill="none" stroke="#fff" strokeWidth="1.300" /></svg>
        </Task>
        <Tray>
          <svg width="14" height="8" fill="none" stroke="#fff" strokeWidth="1.500"><path d="M.7 7.300L7 1l6.300 6.300" /></svg>
          <Gap $size={-2} />
          <svg width="15" height="15" fill="none" stroke="#ddd" strokeWidth="1.400"><path d="M1 14A13 13 0 0114 1M5 14a9 9 0 019-9M9 14a5 5 0 015-5" /><circle cx="12.800" cy="12.800" r="1.600" fill="#fff" stroke="none" /></svg>
          <svg width="19" height="16" fill="none" stroke="#fff" strokeWidth="1.200"><path d="M1 5.500h3L8 2v12l-4-3.500H1zM10.500 5.500q2 2.500 0 5M13 3.500q3.500 4.500 0 9" /><path d="M15.500 1.500q5 6.500 0 13" stroke="#888" /></svg>
          <span>英</span>
        </Tray>
      </Taskbar>
    </Frame>
  );
}
